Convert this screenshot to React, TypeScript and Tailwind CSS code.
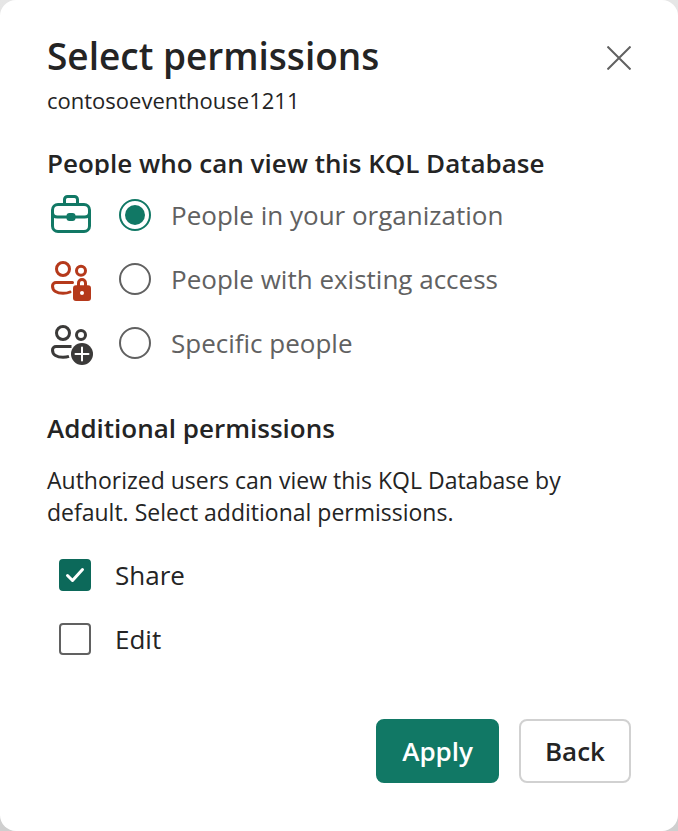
import React, { useState } from 'react';

const BriefcaseIcon: React.FC = () => (
  <svg viewBox="0 0 48 48" className="size-12 shrink-0 text-[#117865]" fill="none" stroke="currentColor" strokeWidth="3" aria-hidden="true">
    <rect x="5.5" y="13.5" width="37" height="27" rx="5.5" />
    <path d="M17.5 13V8.5a3 3 0 0 1 3-3h7a3 3 0 0 1 3 3V13" />
    <path d="M5.5 21.5c0 3 2 4.5 5 4.5h27c3 0 5-1.5 5-4.5" />
    <rect x="19.5" y="22" width="9" height="8" rx="3" fill="currentColor" stroke="none" />
  </svg>
);

const PeopleLockIcon: React.FC = () => (
  <svg viewBox="0 0 48 48" className="size-12 shrink-0 text-[#b5391b]" fill="none" stroke="currentColor" strokeWidth="3" aria-hidden="true">
    <circle cx="16" cy="14" r="6.5" />
    <circle cx="34" cy="15.7" r="4.5" />
    <path strokeLinecap="round" d="M25.500 27.500H9a3.500 3.500 0 0 0-3.500 3.500C5.500 36 10 38.300 16 38.300c2.500 0 5-.4 7-1.300" />
    <path d="M31.500 32v-4a3.500 3.500 0 0 1 7 0v4" />
    <rect x="26" y="30.3" width="18" height="15.7" rx="3" fill="currentColor" stroke="none" />
    <circle cx="35" cy="38" r="2" fill="white" stroke="none" />
  </svg>
);

const PeopleAddIcon: React.FC = () => (
  <svg viewBox="0 0 48 48" className="size-12 shrink-0 text-[#3b3a39]" fill="none" stroke="currentColor" strokeWidth="3" aria-hidden="true">
    <circle cx="16" cy="14" r="6.5" />
    <circle cx="34" cy="16" r="4.5" />
    <path d="M24.500 27.500H9a3.500 3.500 0 0 0-3.500 3.500C5.500 36 10 38.300 16 38.300c2.200 0 4.200-.3 6-.9" />
    <circle cx="35" cy="35" r="11" fill="currentColor" stroke="none" />
    <path d="M35 28.500v13M28.500 35h13" stroke="white" strokeWidth="2" strokeLinecap="round" />
  </svg>
);

const audiences = [
  { id: 'organization', label: 'People in your organization', Icon: BriefcaseIcon },
  { id: 'existing', label: 'People with existing access', Icon: PeopleLockIcon },
  { id: 'specific', label: 'Specific people', Icon: PeopleAddIcon },
];

interface PermissionProps {
  label: string;
  checked: boolean;
  onToggle: () => void;
}

const Permission: React.FC<PermissionProps> = ({ label, checked, onToggle }) => (
  <label className="flex h-16 items-center gap-6 pl-3 text-[26px] text-[#242424]">
    <span className="grid size-8 shrink-0">
      <input
        type="checkbox"
        checked={checked}
        onChange={onToggle}
        className="col-start-1 row-start-1 size-8 appearance-none rounded border-2 border-[#616161] checked:border-[#0c695a] checked:bg-[#0c695a]"
      />
      {checked && (
        <svg viewBox="0 0 32 32" className="pointer-events-none col-start-1 row-start-1 size-8" fill="none" stroke="white" strokeWidth="3" strokeLinecap="round" strokeLinejoin="round" aria-hidden="true">
          <path d="M8.500 16.500l5 5L23.500 10.500" />
        </svg>
      )}
    </span>
    {label}
  </label>
);

const App: React.FC = () => {
  const [audience, setAudience] = useState('organization');
  const [canShare, setCanShare] = useState(true);
  const [canEdit, setCanEdit] = useState(false);

  return (
    <div className="min-h-screen bg-linear-to-b from-[#e6e6e6] to-[#cfcfcf] font-['Open_Sans','Noto_Sans',sans-serif] text-[#242424]">
      <main className="flex min-h-screen flex-col rounded-2xl bg-white px-[47px] pt-[30px] pb-12">
        {/* Title */}
        <header className="flex items-start justify-between">
          <div>
            <h1 className="text-[37px] leading-[52px] font-semibold">Select permissions</h1>
            <p className="mt-0.5 text-[22px] leading-8">contosoeventhouse1211</p>
          </div>
          <button aria-label="Close" className="mt-4">
            <svg viewBox="0 0 24 24" className="size-6" fill="none" stroke="#616161" strokeWidth="2" aria-hidden="true">
              <path d="M.5.500l23 23M23.500.500l-23 23" />
            </svg>
          </button>
        </header>

        {/* Who can view */}
        <section className="mt-[31px]">
          <h2 id="audience" className="h-7 overflow-hidden text-[26px] leading-8 font-semibold">
            People who can view this KQL Database
          </h2>
          <div role="radiogroup" aria-labelledby="audience" className="mt-2">
            {audiences.map(({ id, label, Icon }) => (
              <label key={id} className="flex h-16 items-center text-[26px] text-[#616161]">
                <Icon />
                <input
                  type="radio"
                  name="audience"
                  checked={audience === id}
                  onChange={() => setAudience(id)}
                  className="mr-5 ml-6 grid size-8 shrink-0 appearance-none place-content-center rounded-full border-2 border-[#616161] before:size-5 before:rounded-full checked:border-[#117865] checked:before:bg-[#117865]"
                />
                {label}
              </label>
            ))}
          </div>
        </section>

        {/* Additional permissions */}
        <section className="mt-[35px]">
          <h2 className="text-[26px] leading-9 font-semibold">Additional permissions</h2>
          <p className="mt-[18px] max-w-xl pr-8 text-[23px] leading-8">
            Authorized users can view this KQL Database by default. Select additional permissions.
          </p>
          <div className="mt-[15px]">
            <Permission label="Share" checked={canShare} onToggle={() => setCanShare(!canShare)} />
            <Permission label="Edit" checked={canEdit} onToggle={() => setCanEdit(!canEdit)} />
          </div>
        </section>

        {/* Actions */}
        <footer className="mt-auto flex justify-end gap-5 text-[26px] font-semibold">
          <button className="h-16 rounded-lg border-2 border-[#117865] bg-[#117865] px-6 text-white">Apply</button>
          <button className="h-16 rounded-lg border-2 border-[#d1d1d1] px-6">Back</button>
        </footer>
      </main>
    </div>
  );
};

export default App;
